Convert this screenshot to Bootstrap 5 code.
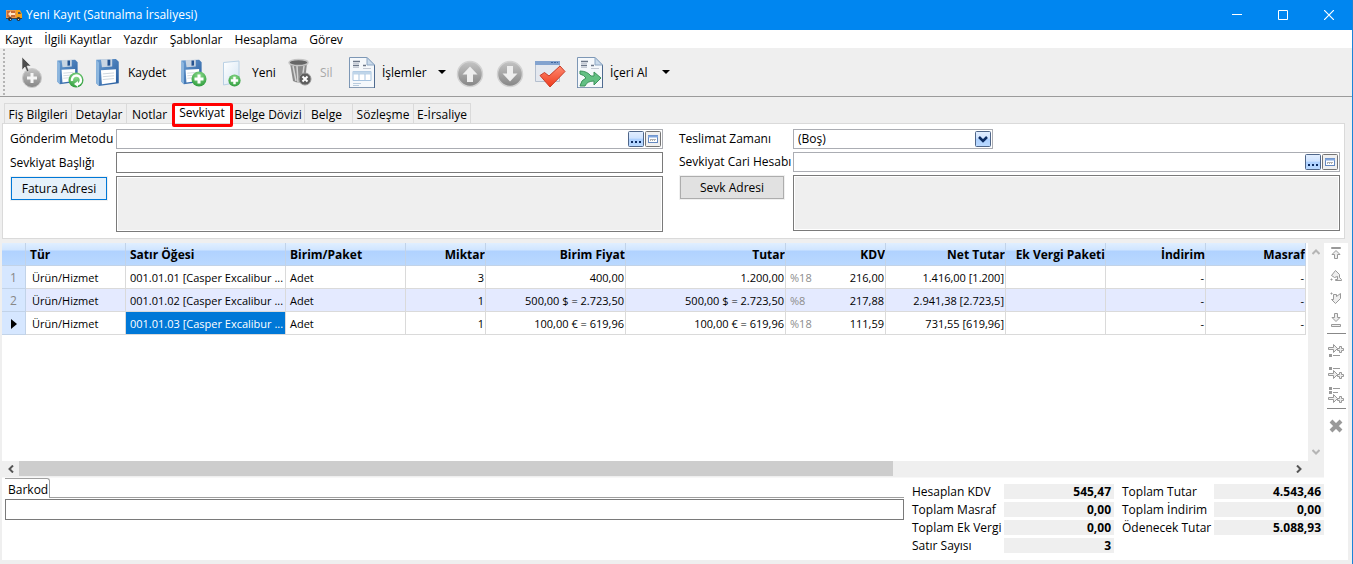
<!DOCTYPE html>
<html lang="tr">
<head>
<meta charset="utf-8">
<meta name="viewport" content="width=device-width, initial-scale=1">
<title>Yeni Kayıt (Satınalma İrsaliyesi)</title>
<link rel="stylesheet" href="https://cdn.jsdelivr.net/npm/bootstrap@5.3.0/dist/css/bootstrap.min.css">
<style>
  :root { --face:#efefef; --rule:#dadada; --edge:#7a7a7a; --title:#0086f0; }
  body { font-family:"Open Sans","Noto Sans",sans-serif; font-size:12px; line-height:16px; color:#000; background:var(--face); border-right:1px solid #1a84d8; white-space:nowrap; }
  button { font:inherit; color:inherit; background:none; border:0; padding:0; }
  input, textarea, select { font:inherit; color:inherit; border-radius:0; min-width:0; }
  svg { display:block; flex:none; }

  .titlebar { height:30px; background:var(--title); color:#fff; padding-left:6px; }
  .titlebar button { width:46px; height:30px; display:grid; place-items:center; }
  .menus { height:18px; background:#fff; padding:2px 0 0 5px; gap:12px; }
  .menus a { color:#000; text-decoration:none; }

  .tools { height:49px; border-bottom:1px solid #9b9b9b; padding-left:3px; }
  .grip { width:13px; height:46px; background:repeating-linear-gradient(#b4b4b4 0 2px,transparent 2px 4px) left/2px 100% no-repeat; }
  .tools button { width:40px; height:40px; display:flex; align-items:center; gap:4px; }
  .tools button span { padding-top:2px; }
  .tools .t-slim { width:38px; }
  .tools .t-mid { width:68px; }
  .tools .t-small { width:62px; }
  .tools .t-wide { width:86px; }
  .tools .t-import { width:82px; }
  .tools .t-drop { width:20px; justify-content:center; margin-right:2px; }
  .tools .t-off { color:#a8a8a8; }

  .sheet-tabs { padding:6px 0 0 4px; height:26px; }
  .sheet-tabs button { height:20px; border:1px solid var(--rule); border-left:0; border-bottom:0; text-align:center; padding-top:2px; }
  .sheet-tabs button:first-child { border-left:1px solid var(--rule); width:68px; }
  .sheet-tabs button:nth-child(2) { width:55px; }
  .sheet-tabs button:nth-child(3) { width:46px; }
  .sheet-tabs button:nth-child(4) { width:59px; }
  .sheet-tabs button:nth-child(5) { width:73px; }
  .sheet-tabs button:nth-child(6) { width:48px; padding-right:4px; }
  .sheet-tabs button:nth-child(7) { width:61px; }
  .sheet-tabs button:nth-child(8) { width:57px; }
  .sheet-tabs .on { position:relative; z-index:1; background:#fff; line-height:14px; padding:0 0 2px; }
  .sheet-tabs .on::after { content:""; position:absolute; inset:-1px -2px -4px -1px; border:3px solid #ff0000; border-radius:2px; }

  .sheet { margin:0 7px 4px 2px; height:116px; padding:5px 4px 0 7px; background:#fff; border:1px solid var(--rule); display:grid; grid-template-columns:calc(50% - 12px) minmax(0,1fr); column-gap:16px; }
  .pair { display:grid; align-content:start; grid-template-columns:106px minmax(0,1fr); row-gap:3px; align-items:start; }
  .pair.right { grid-template-columns:114px minmax(0,1fr); }
  .pair label { line-height:20px; }
  .pair label[for="heading"] { line-height:22px; height:21px; }
  .lookup { height:20px; border:1px solid #abadb3; background:#fff; display:flex; align-items:center; padding-right:1px; gap:1px; }
  .lookup input, .lookup select { flex:1; height:18px; border:0; padding:0 4px; outline:0; background:none; appearance:none; }
  .combo { width:200px; }
  .line { height:21px; border:1px solid var(--edge); width:100%; padding:0 4px; }
  .memo { height:56px; border:1px solid var(--edge); width:100%; background:var(--face); box-shadow:inset 0 0 0 1px #fff; resize:none; display:block; }
  .push { height:23px; width:96px; margin:1px 0 0 1px; background:#e1e1e1; border:1px solid #adadad; outline:1px solid #f0f0f0; }
  .right .push { width:104px; }
  .push.focus { background:#e5f1fb; border-color:#0078d7; }

  .work { margin:0 4px 4px 2px; background:#fff; }
  .datagrid { table-layout:fixed; width:1304px; border-collapse:separate; border-spacing:0; }
  .datagrid th, .datagrid td { height:23px; padding:2px 4px 0; border-right:1px solid var(--rule); border-bottom:1px solid var(--rule); overflow:hidden; }
  .datagrid thead th { background:linear-gradient(#e0efff 0,#d0e5ff 7px,#b0d2ff 8px,#bad9ff 100%); border-color:#c2d3e8; font-weight:700; }
  .datagrid tbody th { background:#d6e7ff; color:#888; font-weight:400; text-align:center; border-color:#c2d3e8; padding:1px 0 0; }
  .datagrid thead .n { text-align:right; padding-right:0; }
  .datagrid td.n { text-align:right; padding-right:1px; }
  .datagrid td { font-size:11px; }
  .datagrid td.k { padding-left:6px; }
  .datagrid tr.alt td { background:#e4eaff; }
  .datagrid td.sel { background:#0078d7; color:#fff; }
  .rate { color:#8c8c8c; }
  .vbar { width:16px; background:var(--face); padding:5px 0; }
  .hbar { height:17px; background:var(--face); padding-right:17px; border-bottom:1px solid #f7f7f7; }
  .hbar button { width:17px; height:16px; display:grid; place-items:center; }
  .thumb { height:15px; background:#cdcdcd; }
  .rail { width:24px; }
  .rail button { height:22px; display:grid; place-items:center; width:24px; }
  .rail hr { margin:2px 0 6px 3px; width:19px; border-top:1px solid #888; opacity:1; }

  .foot { height:82px; padding-right:24px; gap:8px; }
  .entry { padding-left:3px; }
  .bar-label { width:45px; height:20px; line-height:22px; border:1px solid #a0a0a0; border-width:1px 1px 0 0; border-radius:0 3px 0 0; padding-left:3px; }
  .bar-rule { border-bottom:1px solid #a0a0a0; }
  .entry .line { margin-top:1px; display:block; }
  .sums { display:grid; grid-template-columns:92px 110px 100px 110px; grid-auto-rows:15px; row-gap:3px; padding-top:6px; line-height:16px; }
  .sums dt { font-weight:400; }
  .sums dt:nth-of-type(even) { padding-left:8px; }
  .sums dd { margin:0; background:var(--face); text-align:right; font-weight:700; padding-right:3px; }
</style>
</head>
<body class="d-flex flex-column min-vh-100">

<svg width="0" height="0" class="position-absolute" aria-hidden="true">
  <defs>
    <linearGradient id="gBlue" x1="0" y1="0" x2="1" y2="1"><stop offset="0" stop-color="#6d9fd3"/><stop offset="1" stop-color="#23599c"/></linearGradient>
    <linearGradient id="gGray" x1="0" y1="0" x2="0" y2="1"><stop offset="0" stop-color="#c4c4c4"/><stop offset="1" stop-color="#858585"/></linearGradient>
    <radialGradient id="gGreen" cx=".5" cy=".3" r=".7"><stop offset="0" stop-color="#8fdc8f"/><stop offset="1" stop-color="#2f9d3d"/></radialGradient>
    <linearGradient id="gRed" x1="0" y1="0" x2="0" y2="1"><stop offset="0" stop-color="#ff8a70"/><stop offset="1" stop-color="#ee3a1c"/></linearGradient>
    <linearGradient id="gPage" x1="0" y1="0" x2="1" y2="1"><stop offset="0" stop-color="#fff"/><stop offset="1" stop-color="#d5e5f3"/></linearGradient>
    <linearGradient id="gBtn" x1="0" y1="0" x2="0" y2="1"><stop offset="0" stop-color="#e3efff"/><stop offset=".45" stop-color="#cfe3ff"/><stop offset=".5" stop-color="#acd0ff"/><stop offset="1" stop-color="#bbdaff"/></linearGradient>
    <symbol id="floppy" viewBox="0 0 32 32">
      <path d="M4 3 25 2 28 5 28 28 7 31 4 28Z" fill="url(#gBlue)"/>
      <path d="M4 3v25l3 3V6Z" fill="#8db7df"/>
      <path d="M9 2.500 21 2v8L10 11Z" fill="#c9d5e2"/><path d="M16 3h3v6l-3 .3Z" fill="#245390"/>
      <path d="M9 14 25 13v14L10 29Z" fill="#fff"/><path d="M11 18l12-1M11 21l12-1M11 24l12-1" stroke="#ccd4dc" fill="none"/>
    </symbol>
    <symbol id="sheet" viewBox="0 0 32 32">
      <path d="M3.500.5H21L28.500 8v23H3.500Z" fill="#f5f8fb" stroke="#7d97b5"/><path d="M28.500 8v23H3.500" fill="none" stroke="#4e6a8f"/>
      <path d="M21 .5V8h7.500Z" fill="#c9daeb" stroke="#8fa8c4"/>
      <path d="M7 4.500h7M7 8.500h6M17 8.500h3" stroke="#6b7687" stroke-width="1.500"/><path d="M7 6.500h6M7 10.500h6M17 11.500h8" stroke="#c3c9d3"/>
    </symbol>
    <symbol id="plus" viewBox="0 0 16 16"><circle cx="8" cy="8" r="7.500" fill="url(#gGreen)"/><path d="M8 3.500v9M3.500 8h9" stroke="#fff" stroke-width="3"/></symbol>
    <symbol id="rnd" viewBox="0 0 32 32"><circle cx="16" cy="18" r="12.500" fill="url(#gGray)" stroke="#d2d2d2" stroke-width="1.500"/><path d="M16 10.500l7.500 8H19V26h-6v-7.500H8.500Z" fill="#eee"/></symbol>
    <symbol id="dots" viewBox="0 0 16 16"><rect x=".5" y=".5" width="15" height="15" rx="1" fill="url(#gBtn)" stroke="#4f6689"/><path d="M3 10h2v2H3zM7 10h2v2H7zM11 10h2v2h-2z" fill="#0c2c63"/></symbol>
    <symbol id="card" viewBox="0 0 16 16"><rect x=".5" y=".5" width="15" height="15" rx="1" fill="#f0f0f0" stroke="#747474"/><rect x="3.500" y="4.500" width="9" height="7" fill="#fff" stroke="#6488c0"/><path d="M3 5.500h10" stroke="#7fa5dc" stroke-width="2"/><path d="M5 8.500h6M5 9.500h1m1 0h1m1 0h1" stroke="#b0b0b0"/></symbol>
    <symbol id="insert" viewBox="0 0 16 16"><path d="M.5 4.500h5v-3l4 4-4 4v-3h-5z" fill="#eee" stroke="#999"/><path d="M11.500 3.500h2v2h2v2h-2v2h-2v-2h-2v-2h2z" fill="#eee" stroke="#999"/></symbol>
  </defs>
</svg>

<header class="titlebar d-flex align-items-center">
  <svg width="16" height="16" viewBox="0 0 16 16"><path d="M0 3h10v8H0z" fill="#e89a55"/><path d="M1 4h8v6H1z" fill="#c86b35"/><path d="M2 7l3-3v2h4v2H5v2z" fill="#ffe3c0"/><path d="M10 3h4l2 4v4h-6z" fill="#f6a21b"/><path d="M12 5h2l1 2h-3z" fill="#456"/><path d="M0 11h16v1H0z" fill="#434343"/><circle cx="4" cy="12" r="2" fill="#333"/><circle cx="12.500" cy="12" r="2" fill="#333"/><path d="M4 12h1v1H4zM12 12h1v1h-1z" fill="#ccc"/></svg>
  <span class="ms-1 flex-fill">Yeni Kayıt (Satınalma İrsaliyesi)</span>
  <button aria-label="Küçült"><svg width="10" height="10"><path d="M0 4.500h10" stroke="#fff"/></svg></button>
  <button aria-label="Ekranı kapla"><svg width="10" height="10"><path d="M.5.5h9v9h-9z" fill="none" stroke="#fff"/></svg></button>
  <button aria-label="Kapat"><svg width="10" height="10"><path d="M0 0l10 10M10 0L0 10" stroke="#fff" stroke-width="1.200"/></svg></button>
</header>

<nav class="menus d-flex align-items-center">
  <a href="#">Kayıt</a><a href="#">İlgili Kayıtlar</a><a href="#">Yazdır</a><a href="#">Şablonlar</a><a href="#">Hesaplama</a><a href="#">Görev</a>
</nav>

<div class="tools d-flex align-items-center" role="toolbar">
  <span class="grip"></span>
  <button class="t-slim" aria-label="Seç"><svg width="32" height="32" viewBox="0 0 32 32"><circle cx="16" cy="22" r="9.500" fill="url(#gGray)" stroke="#ccc"/><path d="M16 17v10M11 22h10" stroke="#f5f5f5" stroke-width="3"/><path d="M6 1v13l3-3 2 5 2-1-2-5h4Z" fill="#4d4d4d" stroke="#eee" stroke-width=".6"/></svg></button>
  <button class="t-slim" aria-label="Kaydet ve yenile"><svg width="32" height="32"><use href="#floppy" width="27" height="29" y="1"/><circle cx="22" cy="24" r="7.500" fill="url(#gGreen)"/><path d="M18 25a4.500 4.500 0 1 1 5 3.500" fill="none" stroke="#fff" stroke-width="2.400"/><path d="M24 25v6l-4-3z" fill="#fff"/></svg></button>
  <button class="t-wide"><svg width="32" height="32"><use href="#floppy" width="31" height="30" y="1"/></svg><span>Kaydet</span></button>
  <button class="t-slim" aria-label="Kaydet ve yeni"><svg width="32" height="32"><use href="#floppy" width="27" height="29" y="1"/><use href="#plus" x="13" y="15" width="16" height="16"/></svg></button>
  <button class="t-mid"><svg width="32" height="32"><path d="M7.500 6.500 23 5v21L7.500 29Z" fill="url(#gPage)" stroke="#b9d0e4"/><use href="#plus" x="12" y="18" width="13" height="13"/></svg><span>Yeni</span></button>
  <button class="t-small t-off"><svg width="32" height="32"><path d="M6 7h17l-2 18q-6 3-12 0Z" fill="#8a8a8a"/><path d="M9 10l3 15M13 10l1 16M20 10l-2 15" stroke="#d4d4d4" stroke-width="1.500"/><ellipse cx="14.500" cy="6.500" rx="9.500" ry="3" fill="#666" stroke="#c4c4c4" stroke-width="1.500"/><circle cx="21" cy="23" r="6" fill="#5e5e5e" stroke="#999"/><path d="M18.500 20.500l5 5m0-5l-5 5" stroke="#fff" stroke-width="2"/></svg><span>Sil</span></button>
  <button class="t-wide"><svg width="32" height="32"><use href="#sheet" y="1" width="32" height="32"/><path d="M7 15.500h18v9H7Z" fill="#fff" stroke="#a7c3df"/><path d="M7 17h18" stroke="#bfd5e9" stroke-width="3"/><path d="M13 18v6m6-6v6" stroke="#a7c3df"/><path d="M7 27.500h8M7 29.500h6" stroke="#b8cbdd"/></svg><span>İşlemler</span></button>
  <button class="t-drop" aria-label="İşlemler menüsü"><svg width="8" height="4"><path d="M0 0h8L4 4z"/></svg></button>
  <button aria-label="Yukarı"><svg width="32" height="32"><use href="#rnd" width="32" height="32"/></svg></button>
  <button aria-label="Aşağı"><svg width="32" height="32"><circle cx="16" cy="18" r="12.500" fill="url(#gGray)" stroke="#d2d2d2" stroke-width="1.500"/><path d="M16 25.500l7.500-8H19V10h-6v7.500H8.500Z" fill="#eee"/></svg></button>
  <button aria-label="Onayla"><svg width="32" height="32"><path d="M1.500 5.500h24v20h-24z" fill="#e4e8ef" stroke="#b4bfce"/><path d="M1 5h25v4H1z" fill="#83a3cf"/><path d="M17 6.500h7" stroke="#40669e" stroke-dasharray="2 1"/><path d="M6 19.500l4.500-3L15 20 26 10l5 5.500L16 31Z" fill="url(#gRed)" stroke="#c83d28"/></svg></button>
  <button class="t-import"><svg width="32" height="32"><use href="#sheet" y="1" width="32" height="32"/><path d="M6 15q7 0 11 5l3 0v-4l7 6-7 7v-4q-7 0-9 5H6q1-6 6-8-2-3-6-4Z" fill="#62bf83" stroke="#3b925b"/></svg><span>İçeri Al</span></button>
  <button class="t-drop" aria-label="İçeri al menüsü"><svg width="8" height="4"><path d="M0 0h8L4 4z"/></svg></button>
</div>

<div class="sheet-tabs d-flex" role="tablist">
  <button role="tab">Fiş Bilgileri</button><button role="tab">Detaylar</button><button role="tab">Notlar</button><button role="tab" class="on" aria-selected="true">Sevkiyat</button><button role="tab">Belge Dövizi</button><button role="tab">Belge</button><button role="tab">Sözleşme</button><button role="tab">E-İrsaliye</button>
</div>

<form class="sheet">
  <div class="pair">
    <label for="method">Gönderim Metodu</label>
    <div class="lookup"><input id="method" type="text"><button type="button" aria-label="Seç"><svg width="16" height="16"><use href="#dots"/></svg></button><button type="button" aria-label="Kartı aç"><svg width="16" height="16"><use href="#card"/></svg></button></div>
    <label for="heading">Sevkiyat Başlığı</label>
    <input id="heading" class="line" type="text">
    <button type="button" class="push focus">Fatura Adresi</button>
    <textarea class="memo" aria-label="Fatura Adresi" readonly></textarea>
  </div>
  <div class="pair right">
    <label for="time">Teslimat Zamanı</label>
    <div class="lookup combo"><select id="time"><option>(Boş)</option></select><svg width="16" height="16"><rect x=".5" y=".5" width="15" height="15" rx="1" fill="url(#gBtn)" stroke="#4f6689"/><path d="M4 6l4 4 4-4" fill="none" stroke="#0c2c63" stroke-width="2.500"/></svg></div>
    <label for="account">Sevkiyat Cari Hesabı</label>
    <div class="lookup"><input id="account" type="text"><button type="button" aria-label="Seç"><svg width="16" height="16"><use href="#dots"/></svg></button><button type="button" aria-label="Kartı aç"><svg width="16" height="16"><use href="#card"/></svg></button></div>
    <button type="button" class="push">Sevk Adresi</button>
    <textarea class="memo" aria-label="Sevk Adresi" readonly></textarea>
  </div>
</form>

<main class="work flex-fill d-flex flex-column">
  <div class="d-flex flex-fill">
    <div class="flex-fill d-flex flex-column overflow-hidden">
      <div class="d-flex flex-fill">
        <div class="flex-fill overflow-hidden">
          <table class="datagrid">
            <colgroup><col width="24"><col width="100"><col width="160"><col width="120"><col width="80"><col width="140"><col width="160"><col width="100"><col width="120"><col width="100"><col width="100"><col width="100"></colgroup>
            <thead><tr><th></th><th>Tür</th><th>Satır Öğesi</th><th>Birim/Paket</th><th class="n">Miktar</th><th class="n">Birim Fiyat</th><th class="n">Tutar</th><th class="n">KDV</th><th class="n">Net Tutar</th><th class="n">Ek Vergi Paketi</th><th class="n">İndirim</th><th class="n">Masraf</th></tr></thead>
            <tbody>
              <tr><th>1</th><td class="k">Ürün/Hizmet</td><td>001.01.01 [Casper Excalibur ...</td><td>Adet</td><td class="n">3</td><td class="n">400,00</td><td class="n">1.200,00</td><td class="n"><span class="rate float-start">%18</span>216,00</td><td class="n">1.416,00 [1.200]</td><td></td><td class="n">-</td><td class="n">-</td></tr>
              <tr class="alt"><th>2</th><td class="k">Ürün/Hizmet</td><td>001.01.02 [Casper Excalibur ...</td><td>Adet</td><td class="n">1</td><td class="n">500,00 $ = 2.723,50</td><td class="n">500,00 $ = 2.723,50</td><td class="n"><span class="rate float-start">%8</span>217,88</td><td class="n">2.941,38 [2.723,5]</td><td></td><td class="n">-</td><td class="n">-</td></tr>
              <tr><th><svg class="m-auto" width="6" height="10"><path d="M0 0l6 5-6 5z"/></svg></th><td class="k">Ürün/Hizmet</td><td class="sel">001.01.03 [Casper Excalibur ...</td><td>Adet</td><td class="n">1</td><td class="n">100,00 € = 619,96</td><td class="n">100,00 € = 619,96</td><td class="n"><span class="rate float-start">%18</span>111,59</td><td class="n">731,55 [619,96]</td><td></td><td class="n">-</td><td class="n">-</td></tr>
            </tbody>
          </table>
        </div>
        <div class="vbar d-flex flex-column justify-content-between align-items-center">
          <svg width="8" height="8"><path d="M0.500 6L4 2.500 7.500 6" fill="none" stroke="#b5b5b5" stroke-width="2"/></svg>
          <svg width="8" height="8"><path d="M0.500 2L4 5.500 7.500 2" fill="none" stroke="#b5b5b5" stroke-width="2"/></svg>
        </div>
      </div>
      <div class="hbar d-flex">
        <button aria-label="Sola kaydır"><svg width="8" height="8"><path d="M6 .5L2.500 4 6 7.500" fill="none" stroke="#555" stroke-width="2"/></svg></button>
        <div class="flex-fill"><div class="thumb" style="width:68.8%"></div></div>
        <button aria-label="Sağa kaydır"><svg width="8" height="8"><path d="M2 .5L5.500 4 2 7.500" fill="none" stroke="#555" stroke-width="2"/></svg></button>
      </div>
    </div>
    <div class="rail">
      <button aria-label="En başa"><svg width="16" height="16" fill="#eee" stroke="#999"><path d="M3.500 1.500h9v1h-9zM8 4.500l4 4H9.500v4h-3v-4H4z"/></svg></button>
      <button aria-label="Yukarı taşı"><svg width="16" height="16" fill="#eee" stroke="#999"><path d="M7.500 2.500l4 4v3l2 2v1H7.500v-1h2v-3l-3 1-3-2z"/><path d="M3 11h1v1H3z" fill="#999"/></svg></button>
      <button aria-label="Aşağı taşı"><svg width="16" height="16" fill="#eee" stroke="#999"><path d="M5.500 4.500h3v2l4-3v5l-5 5-4-4h2z"/><path d="M3 3h1v1H3z" fill="#999"/></svg></button>
      <button aria-label="En sona"><svg width="16" height="16" fill="#eee" stroke="#999"><path d="M6.500 1.500h3v4H12l-4 4-4-4h2.500zM3.500 12.500h9v2h-9z"/></svg></button>
      <hr>
      <button aria-label="Satır ekle"><svg width="16" height="16"><use href="#insert"/><path d="M1 11h3v3H1zM5 12h7v1H5z" fill="#999"/></svg></button>
      <button aria-label="Araya ekle"><svg width="16" height="16"><use href="#insert" y="4"/><path d="M1 2h3v3H1zM5 3h7v1H5z" fill="#999"/></svg></button>
      <button aria-label="Sona ekle"><svg width="16" height="16"><use href="#insert" y="6"/><path d="M1 0h3v3H1zM5 1h7v1H5zM1 4h3v3H1zM5 5h5v1H5z" fill="#999"/></svg></button>
      <hr>
      <button aria-label="Satırı sil"><svg width="16" height="16"><path d="M3 3l10 10M13 3L3 13" stroke="#999" stroke-width="4"/></svg></button>
    </div>
  </div>
  <div class="foot d-flex">
    <div class="flex-fill entry">
      <div class="d-flex"><label class="bar-label" for="barcode">Barkod</label><span class="bar-rule flex-fill"></span></div>
      <input id="barcode" class="line" type="text">
    </div>
    <dl class="sums m-0">
      <dt>Hesaplan KDV</dt><dd>545,47</dd><dt>Toplam Tutar</dt><dd>4.543,46</dd>
      <dt>Toplam Masraf</dt><dd>0,00</dd><dt>Toplam İndirim</dt><dd>0,00</dd>
      <dt>Toplam Ek Vergi</dt><dd>0,00</dd><dt>Ödenecek Tutar</dt><dd>5.088,93</dd>
      <dt>Satır Sayısı</dt><dd>3</dd>
    </dl>
  </div>
</main>

<script src="https://cdn.jsdelivr.net/npm/bootstrap@5.3.0/dist/js/bootstrap.bundle.min.js"></script>
</body>
</html>
